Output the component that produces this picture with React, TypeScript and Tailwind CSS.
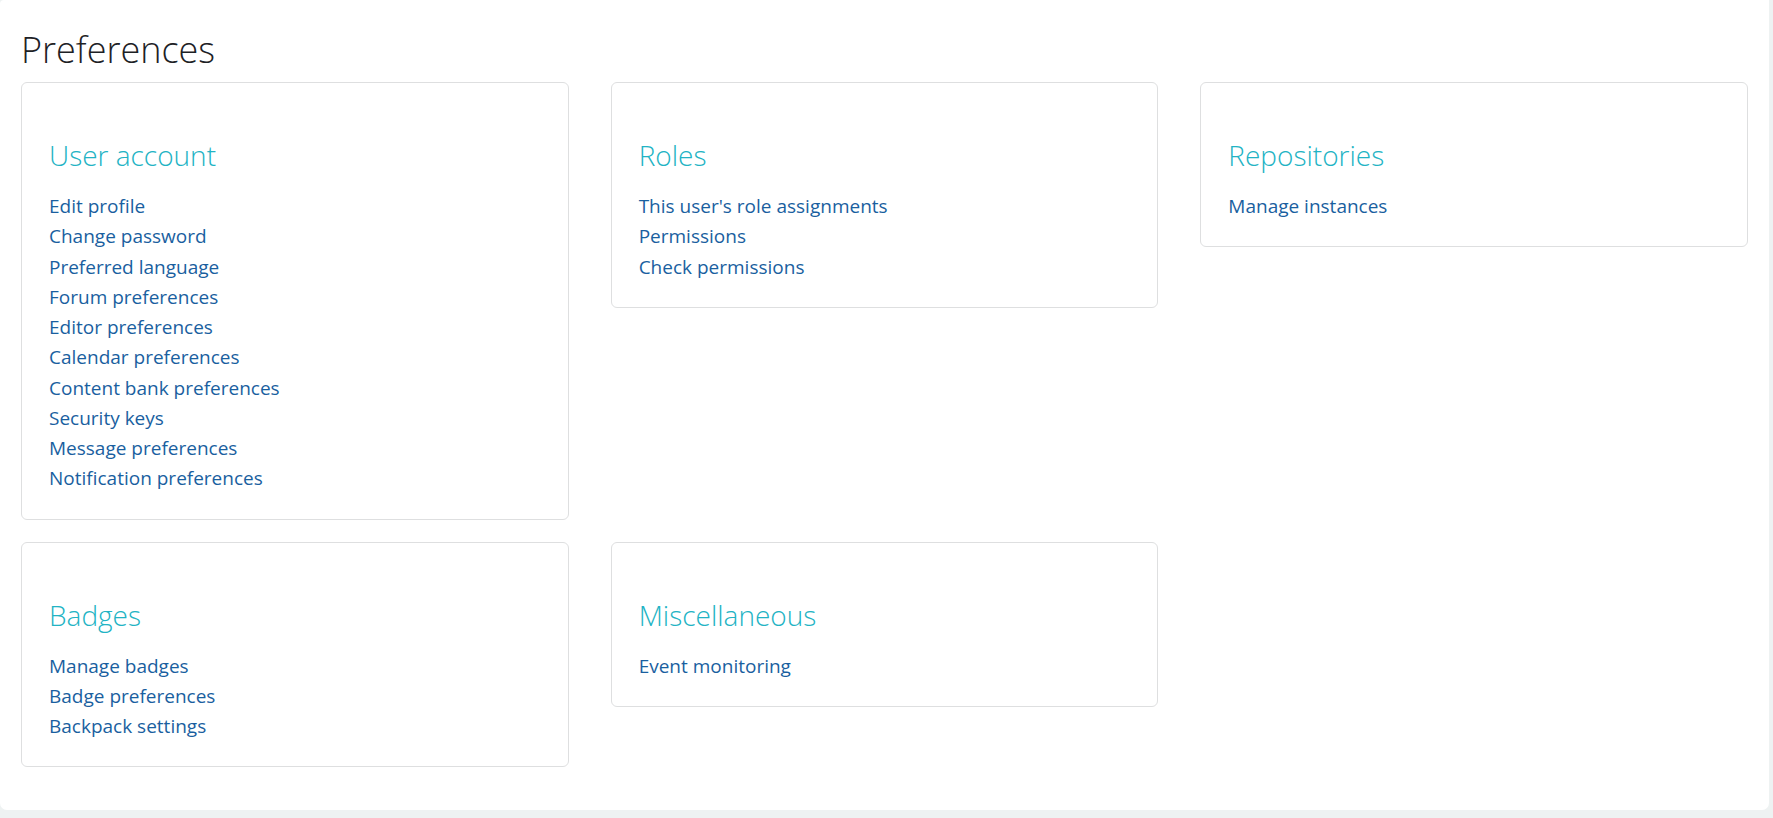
type Section = {
  title: string;
  links: string[];
};

const topRow: Section[] = [
  {
    title: "User account",
    links: [
      "Edit profile",
      "Change password",
      "Preferred language",
      "Forum preferences",
      "Editor preferences",
      "Calendar preferences",
      "Content bank preferences",
      "Security keys",
      "Message preferences",
      "Notification preferences",
    ],
  },
  {
    title: "Roles",
    links: ["This user's role assignments", "Permissions", "Check permissions"],
  },
  { title: "Repositories", links: ["Manage instances"] },
];

const bottomRow: Section[] = [
  {
    title: "Badges",
    links: ["Manage badges", "Badge preferences", "Backpack settings"],
  },
  { title: "Miscellaneous", links: ["Event monitoring"] },
];

function PrefCard({ title, links }: Section) {
  return (
    <div className="border border-[#dedfe0] rounded-[6px] bg-white px-[27px] pt-[54px] pb-[25px]">
      <h3 className="text-[28px] leading-[36px] font-light text-[#22b3c4] mb-[18px]">{title}</h3>
      <ul>
        {links.map((link) => (
          <li key={link} className="text-[19px] leading-[30.25px]">
            <a href="#" className="text-[#1a5f9f]">
              {link}
            </a>
          </li>
        ))}
      </ul>
    </div>
  );
}

export default function App() {
  return (
    <div
      className="min-h-screen bg-[#eef2f2] pr-[4px] pb-[7px]"
      style={{ fontFamily: '"Open Sans", "Noto Sans", sans-serif' }}
    >
      <div className="bg-white rounded-b-[7px] rounded-tl-[4px] px-[21px] pt-[26px] pb-[43px]">
        <h2 className="text-[36px] leading-[48px] font-light text-[#1d2125] mb-[8px]">Preferences</h2>
        <div className="grid grid-cols-3 gap-x-[42px] gap-y-[22px] items-start">
          {topRow.map((s) => (
            <PrefCard key={s.title} {...s} />
          ))}
          {bottomRow.map((s) => (
            <PrefCard key={s.title} {...s} />
          ))}
        </div>
      </div>
    </div>
  );
}
